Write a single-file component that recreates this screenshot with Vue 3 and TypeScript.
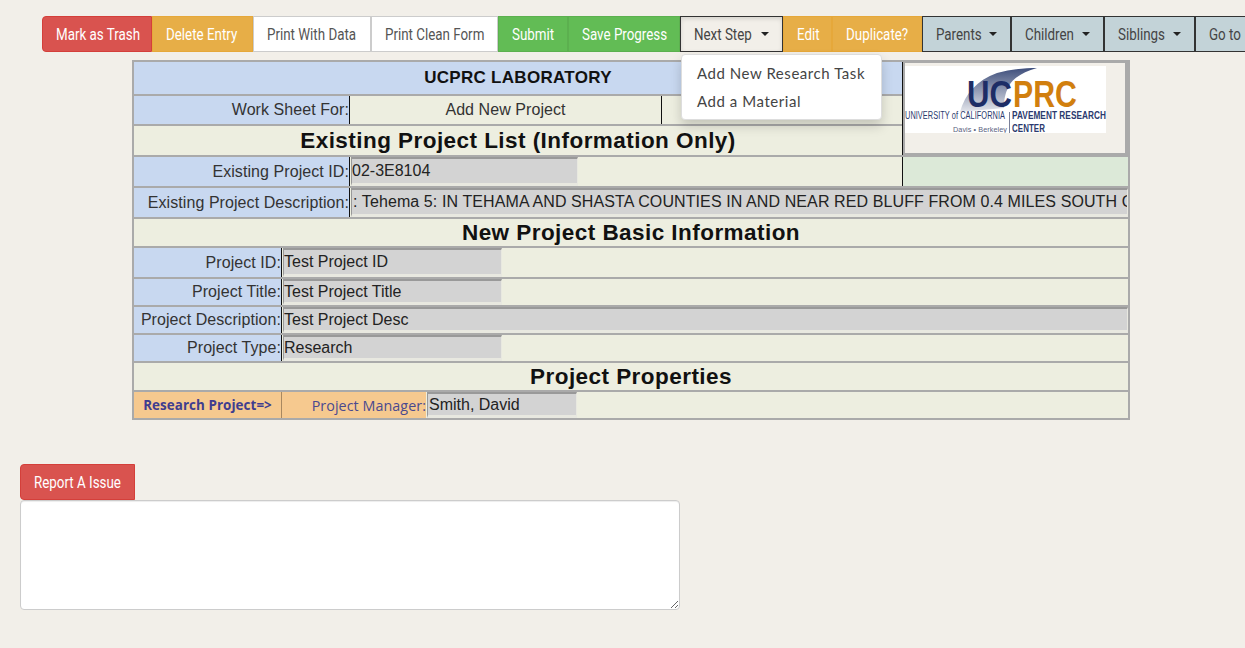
<script setup lang="ts">
interface ToolButton {
  label: string;
  kind: string;
  width: number;
  caret?: boolean;
}

const toolButtons: ToolButton[] = [
  { label: 'Mark as Trash', kind: 'danger', width: 110 },
  { label: 'Delete Entry', kind: 'warning', width: 101 },
  { label: 'Print With Data', kind: 'plain', width: 118 },
  { label: 'Print Clean Form', kind: 'plain', width: 127 },
  { label: 'Submit', kind: 'success', width: 70 },
  { label: 'Save Progress', kind: 'success', width: 112 },
  { label: 'Next Step', kind: 'open', width: 103, caret: true },
  { label: 'Edit', kind: 'warning', width: 49 },
  { label: 'Duplicate?', kind: 'warning', width: 90 },
  { label: 'Parents', kind: 'slate', width: 89, caret: true },
  { label: 'Children', kind: 'slate', width: 93, caret: true },
  { label: 'Siblings', kind: 'slate', width: 91, caret: true },
  { label: 'Go to', kind: 'slate', width: 80, caret: true },
];

const nextSteps = ['Add New Research Task', 'Add a Material'];

const description =
  ': Tehema 5: IN TEHAMA AND SHASTA COUNTIES IN AND NEAR RED BLUFF FROM 0.4 MILES SOUTH OF BELL MILL ROAD TO 0.3 MILES NORTH OF';

const projectRows = [
  { label: 'Project ID:', value: 'Test Project ID', wide: false, tall: true },
  { label: 'Project Title:', value: 'Test Project Title', wide: false, tall: false },
  { label: 'Project Description:', value: 'Test Project Desc', wide: true, tall: false },
  { label: 'Project Type:', value: 'Research', wide: false, tall: false },
];
</script>

<template>
  <div class="page">
    <div class="toolbar">
      <button
        v-for="b in toolButtons"
        :key="b.label"
        class="tool-btn"
        :class="b.kind"
        :style="{ width: b.width + 'px' }"
      >
        <span class="btn-text">{{ b.label }}</span>
        <span v-if="b.caret" class="caret"></span>
        <span v-if="b.kind === 'open'" class="dropdown">
          <span v-for="s in nextSteps" :key="s" class="dropdown-item">{{ s }}</span>
        </span>
      </button>
    </div>

    <div class="sheet">
      <div class="head-block">
        <div class="head-rows">
          <div class="row title-row">UCPRC LABORATORY</div>
          <div class="row for-row">
            <div class="label label-long">Work Sheet For:</div>
            <div class="for-value">Add New Project</div>
            <div class="for-spare"></div>
          </div>
          <div class="row section existing">Existing Project List (Information Only)</div>
        </div>
        <div class="logo-box">
          <svg class="logo" viewBox="0 0 201 67" width="201" height="67">
            <defs>
              <linearGradient id="swoosh" x1="0" y1="0" x2="0" y2="1">
                <stop offset="0" stop-color="#3f4f7c" />
                <stop offset="1" stop-color="#e4e6ec" />
              </linearGradient>
            </defs>
            <rect width="201" height="67" fill="#fff" />
            <path d="M55 46C60 28 72 14 92 7C106 3 120 2 132 2C118 6 108 12 104 20C100 27 99 34 99 42L55 46Z" fill="url(#swoosh)" />
            <text x="62" y="41" class="logo-big" fill="#1d2d66" textLength="45" lengthAdjust="spacingAndGlyphs">UC</text>
            <text x="108" y="41" class="logo-big" fill="#d17f0e" textLength="64" lengthAdjust="spacingAndGlyphs">PRC</text>
            <text x="0" y="53" class="logo-small" fill="#2b3a6e" textLength="100" lengthAdjust="spacingAndGlyphs">UNIVERSITY of CALIFORNIA</text>
            <text x="107" y="53" class="logo-small strong" fill="#2b3a6e" textLength="94" lengthAdjust="spacingAndGlyphs">PAVEMENT RESEARCH</text>
            <text x="48" y="66" class="logo-tiny" fill="#5a6280" textLength="54" lengthAdjust="spacingAndGlyphs">Davis • Berkeley</text>
            <text x="107" y="66" class="logo-small strong" fill="#2b3a6e" textLength="33" lengthAdjust="spacingAndGlyphs">CENTER</text>
            <rect x="104" y="46" width="1" height="21" fill="#7a809a" />
          </svg>
        </div>
      </div>

      <div class="row existing-id">
        <div class="label label-long">Existing Project ID:</div>
        <input class="field field-id" readonly value="02-3E8104" />
        <div class="filler"></div>
        <div class="green-cell"></div>
      </div>
      <div class="row existing-desc">
        <div class="label label-long">Existing Project Description:</div>
        <input class="field field-grow field-long" readonly :value="description" />
      </div>
      <div class="row section basic">New Project Basic Information</div>

      <div
        v-for="p in projectRows"
        :key="p.label"
        class="row"
        :class="p.tall ? 'row-tall' : 'row-short'"
      >
        <div class="label label-short">{{ p.label }}</div>
        <input class="field" :class="p.wide ? 'field-grow' : 'field-short'" readonly :value="p.value" />
      </div>

      <div class="row section properties">Project Properties</div>
      <div class="row research-row">
        <div class="research-name">Research Project=&gt;</div>
        <div class="research-label">Project Manager:</div>
        <input class="field field-manager" readonly value="Smith, David" />
      </div>
    </div>

    <div class="issue">
      <button class="tool-btn danger report"><span class="btn-text">Report A Issue</span></button>
      <textarea class="issue-text"></textarea>
    </div>
  </div>
</template>

<style scoped>
.page {
  width: 1245px;
  height: 648px;
  overflow: hidden;
  background: #f2efe9;
  padding-top: 16px;
  box-sizing: border-box;
  font-family: "Liberation Sans", Arial, sans-serif;
  color: #222;
}

.toolbar {
  display: flex;
  margin-left: 42px;
  height: 36px;
  width: 1240px;
}

.tool-btn {
  position: relative;
  flex: none;
  display: flex;
  align-items: center;
  box-sizing: border-box;
  height: 36px;
  padding: 2px 0 0 13px;
  border: 1px solid transparent;
  margin: 0;
  font-family: "Roboto", sans-serif;
  font-size: 16px;
  line-height: 1;
  white-space: nowrap;
  color: #fff;
  cursor: pointer;
}

.tool-btn:first-child {
  border-radius: 4px 0 0 4px;
}

.btn-text {
  display: inline-block;
  transform: scaleX(0.835);
  transform-origin: left center;
}

.danger {
  background: #d9534f;
  border-color: #d43f3a;
}

.warning {
  background: #e7ae47;
  border-color: #e6a83a;
}

.plain {
  background: #fff;
  border-color: #ccc;
  color: #555;
}

.success {
  background: #62bc55;
  border-color: #5cb04f;
}

.open {
  background: #f2efe9;
  border-color: #333;
  color: #444;
  box-shadow: inset 0 2px 4px rgba(0, 0, 0, 0.12);
  z-index: 3;
}

.slate {
  background: #c3d3d8;
  border-color: #333;
  color: #444;
}

.caret {
  position: absolute;
  right: 13px;
  top: 15px;
  border-top: 4.5px solid #222;
  border-left: 4.5px solid transparent;
  border-right: 4.5px solid transparent;
}

.dropdown {
  position: absolute;
  top: 37px;
  left: 0;
  width: 201px;
  height: 66px;
  padding: 4px 0;
  box-sizing: border-box;
  display: flex;
  flex-direction: column;
  background: #fff;
  border: 1px solid #ddd;
  border-radius: 4px;
  box-shadow: 0 6px 12px rgba(0, 0, 0, 0.175);
  text-align: left;
}

.dropdown-item {
  height: 28px;
  line-height: 28px;
  padding-left: 15px;
  font-family: "Lato", sans-serif;
  font-size: 15px;
  letter-spacing: 0.55px;
  color: #444;
}

.sheet {
  width: 998px;
  margin: 8px 0 0 132px;
  box-sizing: border-box;
  border: 2px solid #aaa;
  font-size: 16px;
  letter-spacing: 0.07px;
}

.head-block {
  display: flex;
  height: 93px;
  border-bottom: 2px solid #aaa;
}

.head-rows {
  width: 768px;
  border-right: 1px solid #111;
}

.row {
  display: flex;
  align-items: stretch;
  border-bottom: 2px solid #aaa;
  background: #edeee0;
}

.row:last-child {
  border-bottom: none;
}

.title-row {
  height: 31px;
  padding-bottom: 1px;
  align-items: center;
  justify-content: center;
  background: #c8d8f0;
  font-size: 17px;
  letter-spacing: 0.3px;
  font-weight: 700;
  color: #111;
}

.for-row {
  height: 28px;
}

.label {
  display: flex;
  align-items: center;
  justify-content: flex-end;
  flex: none;
  box-sizing: border-box;
  background: #c8d8f0;
  border-right: 1px solid #111;
  white-space: nowrap;
  color: #333;
}

.label-long {
  width: 216px;
}

.label-short {
  width: 148px;
}

.for-value {
  width: 311px;
  display: flex;
  align-items: center;
  justify-content: center;
  border-right: 1px solid #111;
  color: #333;
}

.section {
  align-items: center;
  justify-content: center;
  font-weight: 700;
  color: #111;
  letter-spacing: 0.45px;
  font-size: 22.5px;
}

.existing {
  height: 29px;
  border-bottom: none;
}

.basic,
.properties {
  height: 27px;
}

.logo-box {
  width: 225px;
  height: 97px;
  flex: none;
  box-sizing: border-box;
  margin-top: -2px;
  padding-top: 3px;
  border-style: solid;
  border-color: #aaa;
  border-width: 3px 3px 4px 2px;
  background: #f2efe9;
  line-height: 0;
}

.logo {
  display: block;
}

.logo-big {
  font-family: "Liberation Sans", sans-serif;
  font-weight: 700;
  font-size: 36px;
}

.logo-small {
  font-family: "Liberation Sans", sans-serif;
  font-size: 10px;
}

.strong {
  font-weight: 700;
}

.logo-tiny {
  font-family: "Liberation Sans", sans-serif;
  font-size: 8px;
}

.existing-id,
.existing-desc,
.row-tall {
  height: 29px;
}

.row-short {
  height: 26px;
}

.field {
  box-sizing: border-box;
  height: 100%;
  margin: 0 0 0 1px;
  padding: 1px 0 2px 0;
  min-width: 0;
  background: #d3d3d3;
  border-style: solid;
  border-width: 2px 1px 3px 1px;
  border-color: #999 #e8e8e0 #e8e8e0 #999;
  outline: none;
  font-family: "Liberation Sans", Arial, sans-serif;
  font-size: 16px;
  color: #222;
}

.field-long {
  padding-left: 1px;
  letter-spacing: 0.1px;
}

.row-short .field {
  padding-bottom: 0;
}

.field-id {
  width: 227px;
  flex: none;
}

.filler {
  flex: 1;
  border-right: 1px solid #111;
}

.green-cell {
  width: 225px;
  flex: none;
  background: #dce9d8;
}

.field-grow {
  flex: 1;
}

.field-short {
  width: 219px;
  flex: none;
}

.research-row {
  height: 26px;
}

.research-name {
  width: 148px;
  flex: none;
  box-sizing: border-box;
  display: flex;
  align-items: center;
  justify-content: center;
  background: #f6c98f;
  border-right: 1px solid #a88860;
  font-family: "Open Sans", sans-serif;
  font-size: 13.4px;
  font-weight: 700;
  color: #3f3d8f;
}

.research-label {
  width: 144px;
  flex: none;
  display: flex;
  align-items: center;
  justify-content: flex-end;
  background: #f6c98f;
  font-family: "Open Sans", sans-serif;
  font-size: 14.3px;
  color: #4a4a8f;
}

.field-manager {
  width: 150px;
  flex: none;
  padding: 1px 0 0 1px;
}

.issue {
  margin: 44px 0 0 20px;
  display: flex;
  flex-direction: column;
  align-items: flex-start;
}

.report {
  width: 115px;
  border-radius: 4px;
}

.issue-text {
  display: block;
  width: 660px;
  height: 110px;
  box-sizing: border-box;
  margin: 0;
  border: 1px solid #ccc;
  border-radius: 4px;
  background: #fff;
  box-shadow: inset 0 1px 1px rgba(0, 0, 0, 0.075);
  outline: none;
}
</style>

<style>
html,
body {
  margin: 0;
  overflow: hidden;
  background: #f2efe9;
}
</style>
